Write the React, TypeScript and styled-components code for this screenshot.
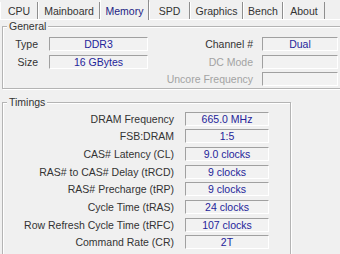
import styled, { createGlobalStyle } from 'styled-components'

const GlobalStyle = createGlobalStyle`
  html, body {
    margin: 0;
    padding: 0;
    background: #f0f0f0;
    overflow: hidden;
  }
  body {
    font-family: Tahoma, "Liberation Sans", Arial, sans-serif;
    font-size: 10.5px;
    color: #333;
  }
`

const Window = styled.div`
  width: 340px;
  height: 254px;
  overflow: hidden;
  background: #f0f0f0;
`

const TabBar = styled.div`
  display: flex;
  height: 20px;
  box-sizing: border-box;
  border-bottom: 1px solid #fff;
`

const Tab = styled.div<{ $width: number; $active?: boolean }>`
  box-sizing: border-box;
  flex-shrink: 0;
  width: ${({ $width }) => $width}px;
  height: ${({ $active }) => ($active ? 20 : 17)}px;
  margin-top: ${({ $active }) => ($active ? 0 : 2)}px;
  display: flex;
  align-items: center;
  justify-content: center;
  padding-top: ${({ $active }) => ($active ? 1 : 0)}px;
  border-left: 1px solid #fff;
  border-right: 1px solid #8e8e8e;
  background: #f0f0f0;
  color: ${({ $active }) => ($active ? '#1c1c84' : '#333')};
  white-space: nowrap;
  position: relative;
  z-index: ${({ $active }) => ($active ? 1 : 0)};
`

const Panel = styled.div`
  padding-left: 2px;
`

const Group = styled.fieldset<{ $width: number; $top: number }>`
  box-sizing: border-box;
  width: ${({ $width }) => $width}px;
  min-width: 0;
  margin: ${({ $top }) => $top}px 0 0;
  padding: 0;
  border: 1px solid #b4b4b4;
  box-shadow: inset 1px 1px #fff, 1px 1px #fff;
`

const Legend = styled.legend`
  margin-left: 4px;
  padding: 0 2px;
  line-height: 13px;
  background: #f0f0f0;
  color: #333;
`

const GeneralGrid = styled.div`
  display: grid;
  grid-template-columns: 145px 190px;
  grid-auto-rows: 14px;
  row-gap: 3.5px;
  padding: 4px 0 2px;
`

const TimingsGrid = styled.div`
  display: grid;
  grid-auto-rows: 14px;
  row-gap: 3.7px;
  padding: 2.5px 21px 8px 0;
`

const Field = styled.div<{ $gap: number; $boxWidth: number }>`
  display: grid;
  grid-template-columns: 1fr ${({ $boxWidth }) => $boxWidth}px;
  column-gap: ${({ $gap }) => $gap}px;
  align-items: center;
`

const Label = styled.span<{ $disabled?: boolean }>`
  text-align: right;
  white-space: nowrap;
  line-height: 14px;
  color: ${({ $disabled }) => ($disabled ? '#a3a3a3' : '#333')};
`

const Value = styled.div`
  box-sizing: border-box;
  height: 14px;
  border-top: 1px solid #a0a0a0;
  border-left: 1px solid #a0a0a0;
  border-bottom: 1px solid #fff;
  border-right: 1px solid #fff;
  background: #f2f2f2;
  color: #24249a;
  text-align: center;
  line-height: 12px;
  white-space: nowrap;
`

const tabs = [
  { name: 'CPU', width: 38 },
  { name: 'Mainboard', width: 62 },
  { name: 'Memory', width: 49, active: true },
  { name: 'SPD', width: 41 },
  { name: 'Graphics', width: 53 },
  { name: 'Bench', width: 40 },
  { name: 'About', width: 42 },
]

const timings = [
  ['DRAM Frequency', '665.0 MHz'],
  ['FSB:DRAM', '1:5'],
  ['CAS# Latency (CL)', '9.0 clocks'],
  ['RAS# to CAS# Delay (tRCD)', '9 clocks'],
  ['RAS# Precharge (tRP)', '9 clocks'],
  ['Cycle Time (tRAS)', '24 clocks'],
  ['Row Refresh Cycle Time (tRFC)', '107 clocks'],
  ['Command Rate (CR)', '2T'],
]

function LeftField({ label, value }: { label: string; value: string }) {
  return (
    <Field $gap={11} $boxWidth={99}>
      <Label>{label}</Label>
      <Value>{value}</Value>
    </Field>
  )
}

function RightField({ label, value, disabled }: { label: string; value: string; disabled?: boolean }) {
  return (
    <Field $gap={9} $boxWidth={76}>
      <Label $disabled={disabled}>{label}</Label>
      <Value>{value}</Value>
    </Field>
  )
}

export default function App() {
  return (
    <>
      <GlobalStyle />
      <Window>
        <TabBar>
          {tabs.map((t) => (
            <Tab key={t.name} $width={t.width} $active={t.active}>
              {t.name}
            </Tab>
          ))}
        </TabBar>
        <Panel>
          <Group $width={346} $top={0}>
            <Legend>General</Legend>
            <GeneralGrid>
              <LeftField label="Type" value="DDR3" />
              <RightField label="Channel #" value="Dual" />
              <LeftField label="Size" value="16 GBytes" />
              <RightField label="DC Mode" value="" disabled />
              <div />
              <RightField label="Uncore Frequency" value="" disabled />
            </GeneralGrid>
          </Group>
          <Group $width={289} $top={7}>
            <Legend>Timings</Legend>
            <TimingsGrid>
              {timings.map(([label, value]) => (
                <Field key={label} $gap={11} $boxWidth={84}>
                  <Label>{label}</Label>
                  <Value>{value}</Value>
                </Field>
              ))}
            </TimingsGrid>
          </Group>
        </Panel>
      </Window>
    </>
  )
}
